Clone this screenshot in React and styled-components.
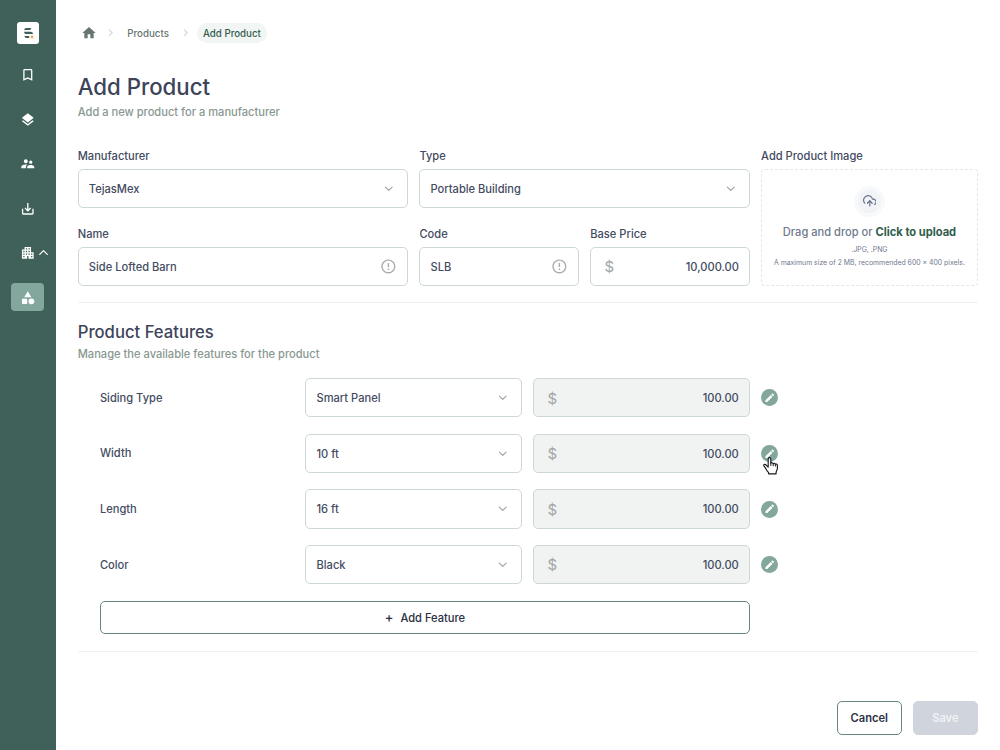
import styled, { createGlobalStyle } from 'styled-components';
import {
  MdHome,
  MdBookmarkBorder,
  MdLayers,
  MdSupervisorAccount,
  MdSaveAlt,
  MdApartment,
  MdCategory,
  MdEdit,
  MdErrorOutline,
} from 'react-icons/md';
import { FiChevronDown, FiChevronUp, FiChevronRight, FiUploadCloud } from 'react-icons/fi';

const GlobalStyle = createGlobalStyle`
  * {
    box-sizing: border-box;
  }
  body {
    margin: 0;
    background: #fff;
    font-family: Inter, "Liberation Sans", sans-serif;
    font-size: 11.11px;
    font-weight: 500;
    color: #434b5f;
  }
  button, input {
    font: inherit;
    color: inherit;
  }
`;

const Page = styled.div`
  display: flex;
  height: 750px;
  overflow: hidden;
`;

const Sidebar = styled.nav`
  flex: 0 0 55.55px;
  display: flex;
  flex-direction: column;
  align-items: center;
  padding-top: 22px;
  background: #40615a;
`;

const Logo = styled.div`
  width: 22.4px;
  height: 22.4px;
  margin-bottom: 16.5px;
  border-radius: 3px;
  background: #fff;
  svg {
    display: block;
    width: 100%;
    height: 100%;
  }
`;

const NavItem = styled.a`
  position: relative;
  display: flex;
  align-items: center;
  justify-content: center;
  width: 33.4px;
  height: 27.8px;
  margin-bottom: 16.72px;
  border-radius: 4px;
  color: #fff;
  background: ${({ $active }) => ($active ? '#83a69d' : 'transparent')};
  font-size: 15.6px;
`;

const NavArrow = styled(FiChevronUp)`
  position: absolute;
  left: 24.5px;
  top: 6.5px;
  font-size: 15px;
  stroke-width: 2;
`;

const Main = styled.main`
  flex: 1;
  display: flex;
  flex-direction: column;
  padding: 23px 22.2px 15.4px;
`;

const Breadcrumb = styled.div`
  display: flex;
  align-items: center;
  height: 20px;
  padding-left: 3.2px;
  font-size: 9.72px;
  color: #66756f;
`;

const HomeIcon = styled(MdHome)`
  font-size: 16px;
  color: #66756f;
`;

const CrumbArrow = styled(FiChevronRight)`
  font-size: 11.5px;
  stroke-width: 2.4;
  color: #d3d7de;
  margin: 0 ${({ $right }) => $right}px 0 ${({ $left }) => $left}px;
`;

const Current = styled.span`
  padding: 0.6px 5.8px 0;
  line-height: 19px;
  border-radius: 10px;
  background: #f1f6f4;
  color: #345c4d;
`;

const Title = styled.h1`
  margin: 29px 0 0;
  font-size: 22.22px;
  line-height: 30px;
  font-weight: 500;
  color: #3d445a;
`;

const SubTitle = styled.p`
  margin: ${({ $top }) => $top}px 0 0;
  line-height: 16px;
  color: #899791;
`;

const FormGrid = styled.div`
  display: grid;
  grid-template-columns: 330.6px 330.6px 1fr;
  column-gap: 11.1px;
  margin-top: 28.2px;
  height: 155.5px;
  padding-bottom: 16.8px;
  border-bottom: 1px solid #eff1f1;
`;

const Column = styled.div`
  display: flex;
  flex-direction: column;
  gap: 17.2px;
`;

const Pair = styled.div`
  display: grid;
  grid-template-columns: 1fr 1fr;
  gap: 11.1px;
`;

const Field = styled.label`
  display: flex;
  flex-direction: column;
`;

const Label = styled.span`
  line-height: 16px;
  margin-bottom: 5.4px;
`;

const Control = styled.div`
  display: flex;
  align-items: center;
  justify-content: space-between;
  height: 39.1px;
  padding: 0.4px 10.1px 0;
  border: 1px solid #cdd8d5;
  border-radius: 5px;
  background: ${({ $disabled }) => ($disabled ? '#f1f3f3' : '#fff')};
`;

const Arrow = styled(FiChevronDown)`
  font-size: 13.5px;
  margin-right: 1.5px;
  color: #9ba3a5;
`;

const InfoIcon = styled(MdErrorOutline)`
  font-size: 16.8px;
  color: #a9abac;
`;

const Dollar = styled.span`
  padding-left: 3.2px;
  font-size: 15px;
  font-weight: 400;
  color: #a0a5a6;
`;

const Upload = styled.div`
  display: flex;
  flex-direction: column;
  align-items: center;
  height: 116.9px;
  padding-top: 15.4px;
  border: 1px dashed #e4e7e7;
  border-radius: 4px;
  color: #6f788d;
`;

const UploadCircle = styled.div`
  display: flex;
  align-items: center;
  justify-content: center;
  width: 31px;
  height: 31px;
  border: 4px solid #f8f9fb;
  border-radius: 50%;
  background: #f1f3f6;
  font-size: 13.6px;
  color: #69748a;
`;

const UploadText = styled.div`
  margin-top: 7.2px;
  line-height: 16px;
  b {
    font-weight: 700;
    color: #2f5d4c;
  }
`;

const UploadHint = styled.div`
  margin-top: ${({ $top }) => $top}px;
  font-size: 6.9px;
  line-height: 9.6px;
  font-weight: 400;
  white-space: nowrap;
`;

const SectionTitle = styled.h2`
  margin: 16.4px 0 0;
  font-size: 16.67px;
  line-height: 24px;
  font-weight: 500;
  color: #3d445a;
`;

const Features = styled.div`
  display: grid;
  row-gap: 16.46px;
  margin-top: 16.5px;
  padding: 0 0 17px 22.2px;
  border-bottom: 1px solid #eff1f1;
`;

const FeatureRow = styled.div`
  display: grid;
  grid-template-columns: 194.4px 216.7px 216.7px 17px;
  column-gap: 11.1px;
  align-items: center;
`;

const EditButton = styled.button`
  position: relative;
  display: flex;
  align-items: center;
  justify-content: center;
  width: 17px;
  height: 17px;
  padding: 0;
  border: 0;
  border-radius: 50%;
  background: #83a69d;
  color: #fff;
  font-size: 11.5px;
`;

const Pointer = styled.svg`
  position: absolute;
  left: 1.2px;
  top: 11px;
  width: 18px;
  height: 20px;
`;

const Button = styled.button`
  display: flex;
  align-items: center;
  justify-content: center;
  gap: 7px;
  width: ${({ $width }) => $width}px;
  height: 33.6px;
  padding: 1px 0 0;
  border: 1px solid ${({ $muted }) => ($muted ? '#d0d4dc' : '#66877e')};
  border-radius: 5px;
  background: ${({ $muted }) => ($muted ? '#d0d4dc' : '#fff')};
  color: ${({ $muted }) => ($muted ? '#f1f3f6' : '#2a3042')};
  font-weight: ${({ $bold }) => ($bold ? 600 : 500)};
`;

const PlusSign = styled.span`
  font-size: 13px;
  line-height: 14px;
  padding-bottom: 2px;
`;

const Footer = styled.div`
  display: flex;
  justify-content: flex-end;
  gap: 11.1px;
  margin-top: auto;
`;

const navItems = [
  { name: 'bookmarks', Icon: MdBookmarkBorder },
  { name: 'layers', Icon: MdLayers },
  { name: 'people', Icon: MdSupervisorAccount },
  { name: 'downloads', Icon: MdSaveAlt },
  { name: 'companies', Icon: MdApartment, open: true },
  { name: 'products', Icon: MdCategory, active: true },
];

const features = [
  { name: 'Siding Type', value: 'Smart Panel', price: '100.00' },
  { name: 'Width', value: '10 ft', price: '100.00', hovered: true },
  { name: 'Length', value: '16 ft', price: '100.00' },
  { name: 'Color', value: 'Black', price: '100.00' },
];

const Select = ({ value }) => (
  <Control>
    <span>{value}</span>
    <Arrow />
  </Control>
);

const Price = ({ value, disabled }) => (
  <Control $disabled={disabled}>
    <Dollar>$</Dollar>
    <span>{value}</span>
  </Control>
);

const HandPointer = () => (
  <Pointer viewBox="0 0 18 20">
    <path
      d="M6.2 11.2V3.1c0-1.9 2.6-1.9 2.6 0v4.2c.3-.9 2.2-.8 2.4.4.5-.7 2-.5 2.2.6.6-.6 2-.2 2 1.1v2.9c0 1.8-1.3 2.6-1.3 4.1v1.4H6.6v-1.2c-1-1.2-2.1-2.6-2.9-4.2-.6-1.1-1.3-1.8-1.8-2.5-.8-1.2.8-2.1 2-1.1l2.3 2.4z"
      fill="#fff"
      stroke="#17191d"
      strokeWidth="1.15"
      strokeLinejoin="round"
    />
    <path d="M8.8 7.2v2.7M11.2 7.8v2.4M13.4 8.5v2" stroke="#17191d" strokeWidth="1" fill="none" />
  </Pointer>
);

const App = () => {
  return (
    <Page>
      <GlobalStyle />
      <Sidebar>
        <Logo>
          <svg viewBox="0 0 22.4 22.4">
            <path d="M9.2 6h5.3l-1.3 2.1H7.2C7.3 6.8 8 6 9.2 6z" fill="#40615a" />
            <path d="M7 9.8h6.6c1.4 0 2.2.8 2.4 2.3H9.3c-1.300 0-2.100-.8-2.300-2.300z" fill="#40615a" />
            <path d="M7.500 13.900h4.700v2.200h-2.200c-1.400 0-2.300-.8-2.500-2.200z" fill="#40615a" />
            <circle cx="15" cy="15" r="1.400" fill="#eda94c" />
          </svg>
        </Logo>
        {navItems.map(({ name, Icon, active, open }) => (
          <NavItem key={name} $active={active}>
            <Icon />
            {open && <NavArrow />}
          </NavItem>
        ))}
      </Sidebar>
      <Main>
        <Breadcrumb>
          <HomeIcon />
          <CrumbArrow $left={8.3} $right={10.6} />
          <span>Products</span>
          <CrumbArrow $left={11.2} $right={5.6} />
          <Current>Add Product</Current>
        </Breadcrumb>
        <Title>Add Product</Title>
        <SubTitle $top={1.8}>Add a new product for a manufacturer</SubTitle>

        <FormGrid>
          <Column>
            <Field>
              <Label>Manufacturer</Label>
              <Select value="TejasMex" />
            </Field>
            <Field>
              <Label>Name</Label>
              <Control>
                <span>Side Lofted Barn</span>
                <InfoIcon />
              </Control>
            </Field>
          </Column>
          <Column>
            <Field>
              <Label>Type</Label>
              <Select value="Portable Building" />
            </Field>
            <Pair>
              <Field>
                <Label>Code</Label>
                <Control>
                  <span>SLB</span>
                  <InfoIcon />
                </Control>
              </Field>
              <Field>
                <Label>Base Price</Label>
                <Price value="10,000.00" />
              </Field>
            </Pair>
          </Column>
          <Field as="div">
            <Label>Add Product Image</Label>
            <Upload>
              <UploadCircle>
                <FiUploadCloud />
              </UploadCircle>
              <UploadText>
                Drag and drop or <b>Click to upload</b>
              </UploadText>
              <UploadHint $top={5}>.JPG, .PNG</UploadHint>
              <UploadHint $top={3}>A maximum size of 2 MB, recommended 600 × 400 pixels.</UploadHint>
            </Upload>
          </Field>
        </FormGrid>

        <SectionTitle>Product Features</SectionTitle>
        <SubTitle $top={2}>Manage the available features for the product</SubTitle>

        <Features>
          {features.map(({ name, value, price, hovered }) => (
            <FeatureRow key={name}>
              <span>{name}</span>
              <Select value={value} />
              <Price value={price} disabled />
              <EditButton>
                <MdEdit />
                {hovered && <HandPointer />}
              </EditButton>
            </FeatureRow>
          ))}
          <Button $width={650}>
            <PlusSign>+</PlusSign>
            <span>Add Feature</span>
          </Button>
        </Features>

        <Footer>
          <Button $width={65} $bold>Cancel</Button>
          <Button $width={65} $bold $muted>Save</Button>
        </Footer>
      </Main>
    </Page>
  );
};

export default App;
